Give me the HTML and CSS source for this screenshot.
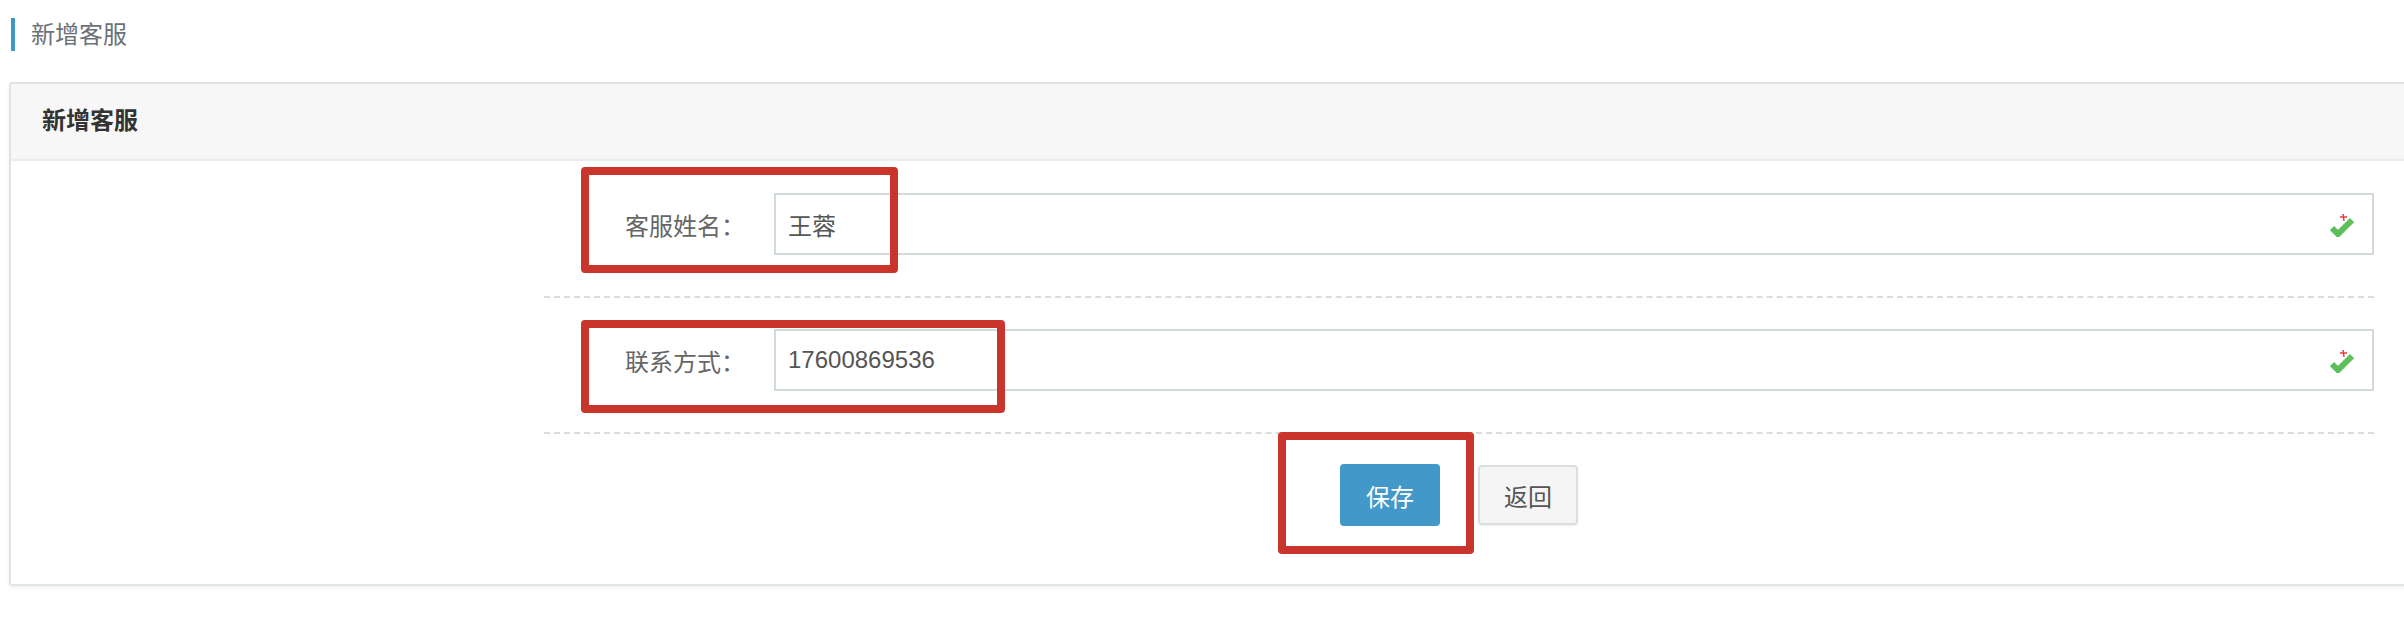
FILE: index.html
```html
<!DOCTYPE html>
<html lang="zh-CN">
  <head>
    <meta charset="UTF-8" />
    <meta name="viewport" content="width=device-width, initial-scale=1.0" />
    <title>新增客服</title>
    <link rel="stylesheet" href="styles.css">
  </head>
  <body>
    <div class="page">
      <div class="page-title">新增客服</div>

      <div class="card">
        <div class="card-header">新增客服</div>
        <div class="card-body">
          <form class="form">
            <div class="form-row">
              <label class="form-label">客服姓名：</label>
              <div class="form-field">
                <input class="form-input" type="text" value="王蓉" />
                <svg class="valid-icon" viewBox="0 0 24 24" width="24" height="24">
                  <path d="M2 15 L8 21 L22 7" fill="none" stroke="#5cbf5c" stroke-width="6" />
                  <path d="M13 1 L14 8 M10 4 L17 4" fill="none" stroke="#ee3b3b" stroke-width="1.5" />
                </svg>
              </div>
            </div>
            <div class="form-row">
              <label class="form-label">联系方式：</label>
              <div class="form-field">
                <input class="form-input" type="text" value="17600869536" />
                <svg class="valid-icon" viewBox="0 0 24 24" width="24" height="24">
                  <path d="M2 15 L8 21 L22 7" fill="none" stroke="#5cbf5c" stroke-width="6" />
                  <path d="M13 1 L14 8 M10 4 L17 4" fill="none" stroke="#ee3b3b" stroke-width="1.5" />
                </svg>
              </div>
            </div>
            <div class="form-actions">
              <button type="button" class="btn btn-primary">保存</button>
              <button type="button" class="btn btn-default">返回</button>
            </div>
          </form>
        </div>
      </div>

      <!-- 标注框 -->
      <div class="mark mark-name"></div>
      <div class="mark mark-phone"></div>
      <div class="mark mark-save"></div>
    </div>
  </body>
</html>
```

FILE: styles.css
```css
html,
body {
  margin: 0;
  padding: 0;
  background: #fff;
}

body {
  font-family: "Liberation Sans", "Noto Sans CJK SC", sans-serif;
  font-size: 24px;
  color: #555;
}

.page {
  position: relative;
  width: 2404px;
  height: 640px;
  overflow: hidden;
  padding-top: 18px;
  box-sizing: border-box;
}

.page-title {
  margin-left: 11px;
  height: 33px;
  line-height: 33px;
  padding-left: 16px;
  border-left: 4px solid #3d97c8;
  color: #6b7177;
}

.card {
  margin: 31px -60px 0 9px;
  border: 2px solid #dfe4e7;
  border-radius: 3px;
  box-shadow: 0 2px 4px rgba(0, 0, 0, 0.06);
}

.card-header {
  height: 75px;
  line-height: 73px;
  padding-left: 31px;
  background: #f7f7f7;
  border-bottom: 2px solid #e9edee;
  font-weight: bold;
  color: #333;
}

.card-body {
  padding: 0 0 58px 533px;
}

.form {
  width: 1830px;
}

.form-row {
  display: flex;
  align-items: center;
  padding: 31px 0 41px;
  border-bottom: 2px dashed #dcdcdc;
}

.form-row:first-child {
  padding-top: 32px;
}

.form-label {
  width: 230px;
  box-sizing: border-box;
  padding-right: 29px;
  text-align: right;
  color: #666;
}

.form-field {
  position: relative;
  flex: 1;
}

.form-input {
  display: block;
  width: 100%;
  height: 62px;
  box-sizing: border-box;
  padding: 0 12px;
  border: 2px solid #d2dade;
  font-family: inherit;
  font-size: 24px;
  color: #555;
  outline: none;
}

.valid-icon {
  position: absolute;
  right: 20px;
  top: 20px;
}

.form-actions {
  display: flex;
  justify-content: center;
  gap: 38px;
  margin-top: 30px;
}

.btn {
  width: 100px;
  height: 62px;
  border-radius: 4px;
  font-family: inherit;
  font-size: 24px;
  cursor: pointer;
}

.btn-primary {
  background: #4299c9;
  border: none;
  color: #fff;
}

.btn-default {
  margin-top: 1px;
  height: 60px;
  background: #f5f5f5;
  border: 2px solid #dadfe2;
  color: #555;
  box-shadow: 0 1px 2px rgba(0, 0, 0, 0.08);
}

.mark {
  position: absolute;
  border: 8px solid #c9352a;
  border-radius: 4px;
  box-sizing: border-box;
}

.mark-name {
  left: 581px;
  top: 167px;
  width: 317px;
  height: 106px;
}

.mark-phone {
  left: 581px;
  top: 320px;
  width: 424px;
  height: 93px;
}

.mark-save {
  left: 1278px;
  top: 432px;
  width: 196px;
  height: 122px;
}
```
